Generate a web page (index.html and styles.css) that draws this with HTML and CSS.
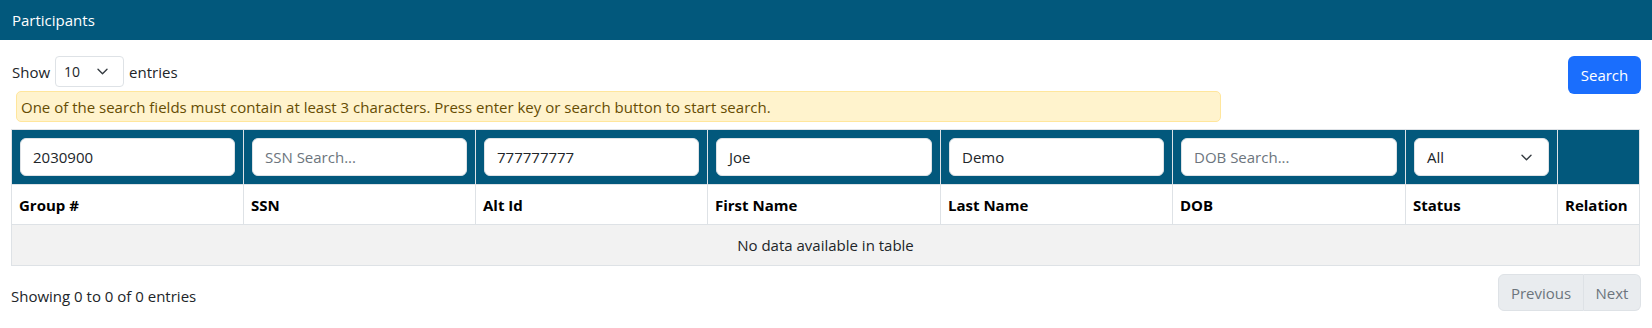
FILE: index.html
```html
<!DOCTYPE html>
<html lang="en">
<head>
<meta charset="utf-8">
<title>Participants</title>
<link rel="stylesheet" href="styles.css">
</head>
<body>
<div class="card-header">Participants</div>
<div class="card-body">
  <div class="top">
    <div class="top-left">
      <div class="length">
        <span>Show</span>
        <div class="fake-select small">
          <span>10</span>
          <svg class="chev" viewBox="0 0 11 7" width="11" height="7"><path d="M1 1.2 5.5 5.7 10 1.2" fill="none" stroke="#343a40" stroke-width="1.4" stroke-linecap="round" stroke-linejoin="round"/></svg>
        </div>
        <span>entries</span>
      </div>
      <div class="alert">One of the search fields must contain at least 3 characters. Press enter key or search button to start search.</div>
    </div>
    <button class="btn-search">Search</button>
  </div>
  <table class="grid">
    <colgroup>
      <col class="c-wide"><col class="c-wide"><col class="c-wide"><col class="c-wide2"><col class="c-wide"><col class="c-wide2"><col class="c-status"><col class="c-rel">
    </colgroup>
    <thead>
      <tr class="filters">
        <th><div class="inp">2030900</div></th>
        <th><div class="inp ph">SSN Search...</div></th>
        <th><div class="inp">777777777</div></th>
        <th><div class="inp">Joe</div></th>
        <th><div class="inp">Demo</div></th>
        <th><div class="inp ph">DOB Search...</div></th>
        <th><div class="fake-select big"><span>All</span><svg class="chev" viewBox="0 0 11 7" width="11" height="7"><path d="M1 1.2 5.5 5.7 10 1.2" fill="none" stroke="#343a40" stroke-width="1.4" stroke-linecap="round" stroke-linejoin="round"/></svg></div></th>
        <th></th>
      </tr>
      <tr class="labels">
        <th>Group #</th><th>SSN</th><th>Alt Id</th><th>First Name</th><th>Last Name</th><th>DOB</th><th>Status</th><th>Relation</th>
      </tr>
    </thead>
    <tbody>
      <tr class="empty"><td colspan="8">No data available in table</td></tr>
    </tbody>
  </table>
  <div class="footer">
    <div class="info">Showing 0 to 0 of 0 entries</div>
    <div class="pager">
      <span class="pg first">Previous</span><span class="pg last">Next</span>
    </div>
  </div>
</div>
</body>
</html>
```
FILE: styles.css
```css
* { box-sizing: border-box; }
body {
  margin: 0;
  font-family: "Open Sans", "Noto Sans", sans-serif;
  font-size: 15px;
  color: #212529;
  background: #fff;
}
.card-header {
  height: 40px;
  background: #02587c;
  color: #fff;
  padding-left: 12px;
  display: flex;
  align-items: center;
  font-size: 15px;
}
.card-body {
  padding: 16px 12px 0 11px;
}
.top {
  display: flex;
  justify-content: space-between;
  align-items: flex-start;
}
.top-left {
  display: flex;
  flex-direction: column;
}
.length {
  display: flex;
  align-items: center;
  gap: 5px;
  height: 31px;
  padding-left: 1px;
}
.fake-select {
  display: flex;
  align-items: center;
  justify-content: space-between;
  background: #fff;
  border: 1px solid #dee2e6;
}
.fake-select.small {
  width: 69px;
  height: 31px;
  border-radius: 4px;
  padding: 0 15px 0 8px;
  font-size: 14px;
}
.fake-select.big {
  width: 135px;
  height: 38px;
  border-radius: 6px;
  padding: 0 16px 0 12px;
  font-weight: normal;
  font-size: 15px;
  color: #212529;
}
.chev { display: block; }
.alert {
  margin-top: 4px;
  margin-left: 5px;
  width: 1205px;
  height: 31px;
  background: #fff3cd;
  border: 1px solid #ffe69c;
  border-radius: 5px;
  color: #664d03;
  padding: 0 4px;
  display: flex;
  align-items: center;
}
.btn-search {
  width: 73px;
  height: 38px;
  background: #1a6efd;
  border: 0;
  border-radius: 6px;
  color: #fff;
  font-family: inherit;
  font-size: 15px;
  margin-right: -1px;
}
.grid {
  margin-top: 7px;
  width: 1629px;
  border-collapse: collapse;
  table-layout: fixed;
}
.c-wide { width: 232px; }
.c-wide2 { width: 233px; }
.c-status { width: 152px; }
.c-rel { width: 82px; }
.grid th, .grid td {
  border: 1px solid #dee2e6;
  text-align: left;
}
.filters th {
  background: #02587c;
  padding: 8px;
  height: 54px;
}
.inp {
  height: 38px;
  background: #fff;
  border: 1px solid #dee2e6;
  border-radius: 6px;
  padding: 0 12px;
  display: flex;
  align-items: center;
  font-weight: normal;
  color: #212529;
  font-size: 15px;
}
.inp.ph { color: #6c757d; }
.labels th {
  height: 40px;
  padding: 0 7px;
  font-weight: 700;
  color: #000;
}
.empty td {
  height: 41px;
  background: #f2f2f2;
  text-align: center;
  color: #212529;
}
.footer {
  display: flex;
  justify-content: space-between;
  align-items: flex-start;
  margin-top: 8px;
}
.info { padding-top: 12px; }
.pager {
  display: flex;
  margin-right: -1px;
}
.pg {
  height: 37px;
  display: flex;
  align-items: center;
  background: #e9ecef;
  border: 1px solid #dee2e6;
  color: #6c757d;
}
.pg.first {
  width: 86px;
  border-radius: 6px 0 0 6px;
  justify-content: center;
}
.pg.last {
  width: 57px;
  border-left: 0;
  border-radius: 0 6px 6px 0;
  justify-content: center;
}
```
